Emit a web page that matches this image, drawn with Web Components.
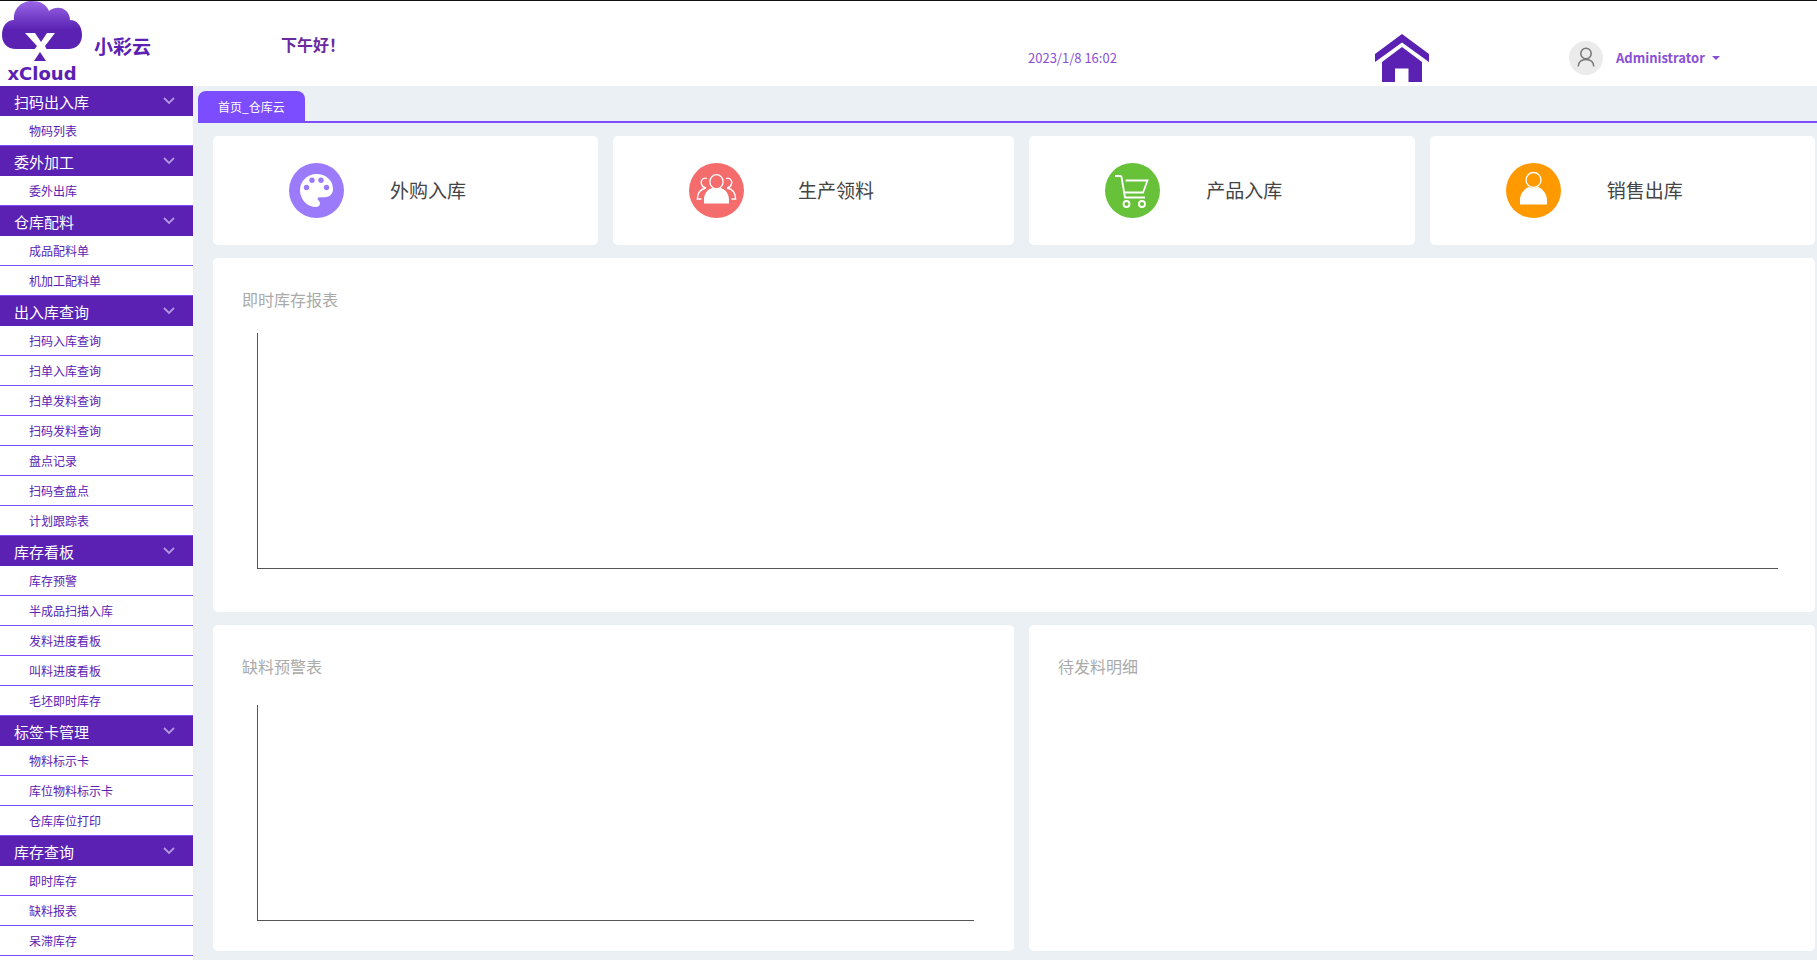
<!DOCTYPE html>
<html lang="zh-CN">
<head>
<meta charset="utf-8">
<title>首页_仓库云</title>
<style>
  body {
    margin: 0;
    background: #ebf0f4;
    font-family: "Noto Sans CJK SC", sans-serif;
    --brand: #5a21b3;
    --accent: #7c4dff;
    --soft: #8950d6;
  }
</style>
</head>
<body>
<x-app>
  <x-header slot="header"></x-header>
  <x-sidebar slot="nav">
    <x-menu label="扫码出入库" items="物码列表"></x-menu>
    <x-menu label="委外加工" items="委外出库"></x-menu>
    <x-menu label="仓库配料" items="成品配料单,机加工配料单"></x-menu>
    <x-menu label="出入库查询" items="扫码入库查询,扫单入库查询,扫单发料查询,扫码发料查询,盘点记录,扫码查盘点,计划跟踪表"></x-menu>
    <x-menu label="库存看板" items="库存预警,半成品扫描入库,发料进度看板,叫料进度看板,毛坯即时库存"></x-menu>
    <x-menu label="标签卡管理" items="物料标示卡,库位物料标示卡,仓库库位打印"></x-menu>
    <x-menu label="库存查询" items="即时库存,缺料报表,呆滞库存"></x-menu>
  </x-sidebar>
  <x-tabs>首页_仓库云</x-tabs>
  <x-dashboard>
    <x-shortcut slot="left" color="#9b7bfa" label="外购入库">
      <svg viewBox="0 0 55 55" width="55" height="55" aria-hidden="true"><path fill="#fff" d="M27.500 11C18.500 11 11 18 11 27.200C11 36.500 18.500 44 27 44C29.500 44 31 42.300 31 40.200C31 38 28.500 37.500 28.500 35.800C28.500 34.500 30 34.200 32 34.200H36C40.500 34.200 44 31 44 26C44 17 36.500 11 27.500 11Z"/><g fill="#9b7bfa"><circle cx="17.500" cy="24.500" r="2.700"/><circle cx="23" cy="17.300" r="2.700"/><circle cx="32" cy="17.300" r="2.700"/><circle cx="37.500" cy="24.500" r="2.700"/></g></svg>
    </x-shortcut>
    <x-shortcut slot="left" color="#f56c6c" label="生产领料">
      <svg viewBox="0 0 55 55" width="55" height="55" aria-hidden="true"><g fill="none" stroke="#fff" stroke-width="1.300"><ellipse cx="27.500" cy="18.700" rx="6.600" ry="7"/><path d="M18 15.500C13.500 14 11.500 18 12.500 21C13 23 14.500 24.500 17 25C11 26 8.500 31 8.300 36H12.500M37 15.500C41.500 14 43.500 18 42.500 21C42 23 40.500 24.500 38 25C44 26 46.500 31 46.700 36H42.500"/></g><path fill="#fff" d="M15 40.500V36C15.500 29 20 25.500 24 25Q27.500 26.800 31 25C35 25.500 39.500 29 40 36V40.500Z"/></svg>
    </x-shortcut>
    <x-shortcut slot="right" color="#67c23a" label="产品入库">
      <svg viewBox="0 0 55 55" width="55" height="55" aria-hidden="true"><g fill="none" stroke="#fff" stroke-width="1.800"><path d="M10 13H15.500Q16.300 13 16.500 14L20 34.500H40M20.500 17.500H42.500L38 29.500H19.500"/><circle cx="21.500" cy="41" r="3"/><circle cx="37" cy="41" r="3"/></g></svg>
    </x-shortcut>
    <x-shortcut slot="right" color="#ff9900" label="销售出库">
      <svg viewBox="0 0 55 55" width="55" height="55" aria-hidden="true"><ellipse cx="27.500" cy="17" rx="7.500" ry="7.500" fill="none" stroke="#fff" stroke-width="1.300"/><path fill="#fff" d="M14 41.500V37C14 31 18.500 25.500 23 24Q27.500 26.500 32 24C36.500 25.500 41 31 41 37V41.500Z"/></svg>
    </x-shortcut>
  </x-dashboard>
</x-app>
<script>
class Base extends HTMLElement {
  constructor() {
    super();
    this.attachShadow({ mode: 'open' });
  }
  connectedCallback() {
    this.shadowRoot.innerHTML = this.render();
  }
}

customElements.define('x-app', class extends Base {
  render() {
    return `<style>
      :host { display: grid; grid-template-columns: 193px minmax(0, 1fr); grid-template-rows: auto 1fr; min-height: 100vh; }
      slot[name="header"] { display: block; grid-column: 1 / -1; }
      slot[name="nav"] { display: block; background: #fff; }
      main { display: flex; flex-direction: column; padding: 5px 0 9px 5px; }
    </style>
    <slot name="header"></slot>
    <slot name="nav"></slot>
    <main><slot></slot></main>`;
  }
});

customElements.define('x-header', class extends Base {
  render() {
    return `<style>
      :host { display: block; background: #fff; border-top: 1px solid #111; }
      header { display: grid; grid-template-columns: 281fr 747fr 347fr 194fr 248fr; height: 85px; color: var(--soft); font-size: 13px; line-height: 24px; }
      header > * { min-width: 0; }
      .brand { display: flex; align-items: center; gap: 12px; padding-left: 2px; color: var(--brand); text-decoration: none; }
      .mark { display: flex; flex-direction: column; align-items: center; align-self: flex-start; width: 80px; }
      .mark svg { display: block; }
      .mark span { margin-top: 2px; font: bold 18px/20px "DejaVu Sans", sans-serif; }
      .brand strong { padding-top: 4px; font-size: 19px; font-weight: 700; }
      h1 { margin: 0; padding-top: 31px; font-size: 16px; line-height: 24px; font-weight: 700; color: #6a2a9e; }
      .cell { display: flex; align-items: center; padding-top: 28px; }
      .cell svg { display: block; }
      button { display: flex; align-items: center; gap: 13px; padding: 0; border: 0; background: none; color: inherit; font: inherit; font-weight: 700; }
      .name { display: flex; align-items: center; gap: 7px; }
      .caret { border: 4px solid transparent; border-top-color: currentColor; border-bottom: 0; }
    </style>
    <header>
      <a class="brand" href="#">
        <span class="mark">
          <svg width="80" height="61" viewBox="0 0 80 61" aria-hidden="true">
            <defs><linearGradient id="g" x1="0" y1="0" x2="0" y2="1"><stop offset="0" stop-color="#9a66e6"/><stop offset=".6" stop-color="#5a21b3"/></linearGradient></defs>
            <path fill="url(#g)" d="M14 48C5 48 0 42 0 34C0 26 4 19 12 19C11 8 19 0 30 0C38 0 44 3 47 10C56 3 68 8 68 19C75 19 80 25 80 34C80 42 75 48 66 48Z"/>
            <path fill="#fff" d="M23 32H33L39 41L45 32H53L43 45L45 49H32L35 45Z"/>
            <path fill="#5a21b3" d="M38 51L44 60H32Z"/>
          </svg>
          <span>xCloud</span>
        </span>
        <strong>小彩云</strong>
      </a>
      <h1>下午好！</h1>
      <div class="cell"><time datetime="2023-01-08T16:02">2023/1/8 16:02</time></div>
      <div class="cell"><a href="#" aria-label="首页">
        <svg width="54" height="48" viewBox="0 0 54 48" fill="#5a21b3"><path d="M27 0L54 20V28L27 8.500L0 28V20Z"/><path d="M27 13L47 28V48H33.500V34.500H20V48H7V28Z"/></svg>
      </a></div>
      <div class="cell"><button type="button">
        <svg width="34" height="34" viewBox="0 0 34 34" aria-hidden="true"><circle cx="17" cy="17" r="17" fill="#ebebeb"/><g fill="none" stroke="#777" stroke-width="1.500"><circle cx="17" cy="12.500" r="5.200"/><path d="M9.200 25.500C9.500 21 12.500 18.500 17 18.500S24.500 21 24.800 25.500"/></g></svg>
        <span class="name">Administrator<span class="caret"></span></span>
      </button></div>
    </header>`;
  }
});

customElements.define('x-sidebar', class extends Base {
  render() {
    return `<style>:host, nav { display: block; }</style><nav><slot></slot></nav>`;
  }
});

customElements.define('x-menu', class extends Base {
  render() {
    const items = this.getAttribute('items').split(',');
    return `<style>
      :host { display: block; }
      button { box-sizing: border-box; display: flex; align-items: center; justify-content: space-between; width: 100%; height: 30px; padding: 0 18px 0 14px; border: 0; background: var(--brand); color: #fff; font: inherit; font-size: 15px; line-height: 26px; }
      span { padding-top: 2px; }
      ul { margin: 0; padding: 0; list-style: none; }
      a { display: block; padding-left: 29px; border-bottom: 1px solid var(--accent); color: var(--brand); font-size: 12px; line-height: 29px; text-decoration: none; }
    </style>
    <button type="button" aria-expanded="true"><span>${this.getAttribute('label')}</span>
      <svg width="12" height="8" viewBox="0 0 12 8" fill="none" stroke="#b296e0" stroke-width="1.800" aria-hidden="true"><path d="M1 1L6 6L11 1"/></svg>
    </button>
    <ul>${items.map(t => `<li><a href="#">${t}</a></li>`).join('')}</ul>`;
  }
});

customElements.define('x-tabs', class extends Base {
  render() {
    return `<style>
      :host { display: flex; border-bottom: 2px solid var(--accent); }
      button { height: 30px; padding: 0 20px; border: 0; border-radius: 8px 8px 0 0; background: var(--accent); color: #fff; font: inherit; font-size: 12px; }
    </style>
    <button type="button" aria-pressed="true"><slot></slot></button>`;
  }
});

customElements.define('x-shortcut', class extends Base {
  render() {
    return `<style>
      :host { display: block; border-radius: 5px; background: #fff; }
      a { display: flex; align-items: center; height: 109px; padding: 0 86px 0 76px; color: #444; font-size: 19px; line-height: 28px; text-decoration: none; }
      .icon { flex: none; height: 55px; border-radius: 50%; background: ${this.getAttribute('color')}; }
      .label { flex: 1; padding-bottom: 2px; text-align: center; white-space: nowrap; }
    </style>
    <a href="#"><span class="icon"><slot></slot></span><span class="label">${this.getAttribute('label')}</span></a>`;
  }
});

customElements.define('x-panel', class extends Base {
  render() {
    return `<style>
      :host { display: flex; flex-direction: column; min-width: 0; border-radius: 5px; background: #fff; }
      h2 { margin: 0; padding: 29px 29px 0; color: #aaa; font-size: 16px; line-height: 24px; font-weight: 400; }
      ::slotted(*) { flex: 1; }
    </style>
    <h2>${this.getAttribute('label')}</h2><slot></slot>`;
  }
});

customElements.define('x-axes', class extends Base {
  render() {
    return `<style>
      :host { display: block; border: solid #555; border-width: 0 0 1px 1px; }
    </style>`;
  }
});

customElements.define('x-dashboard', class extends Base {
  render() {
    return `<style>
      :host { flex: 1; display: flex; flex-direction: column; gap: 13px; padding: 13px 2px 0 15px; }
      .row { display: grid; grid-template-columns: minmax(0, 801fr) minmax(0, 786fr); gap: 15px; }
      .group { display: grid; grid-template-columns: minmax(0, 1fr) minmax(0, 1fr); gap: 15px; }
      .left { grid-template-columns: minmax(0, 385fr) minmax(0, 401fr); }
      .stock { flex: 354 0 354px; }
      .details { flex: 326 0 326px; }
      .stock x-axes { margin: 22px 37px 43px 44px; }
      .details x-axes { margin: 27px 40px 30px 44px; }
    </style>
    <div class="row">
      <div class="group left"><slot name="left"></slot></div>
      <div class="group"><slot name="right"></slot></div>
    </div>
    <x-panel class="stock" label="即时库存报表"><x-axes></x-axes></x-panel>
    <div class="row details">
      <x-panel label="缺料预警表"><x-axes></x-axes></x-panel>
      <x-panel label="待发料明细"></x-panel>
    </div>`;
  }
});
</script>
</body>
</html>
